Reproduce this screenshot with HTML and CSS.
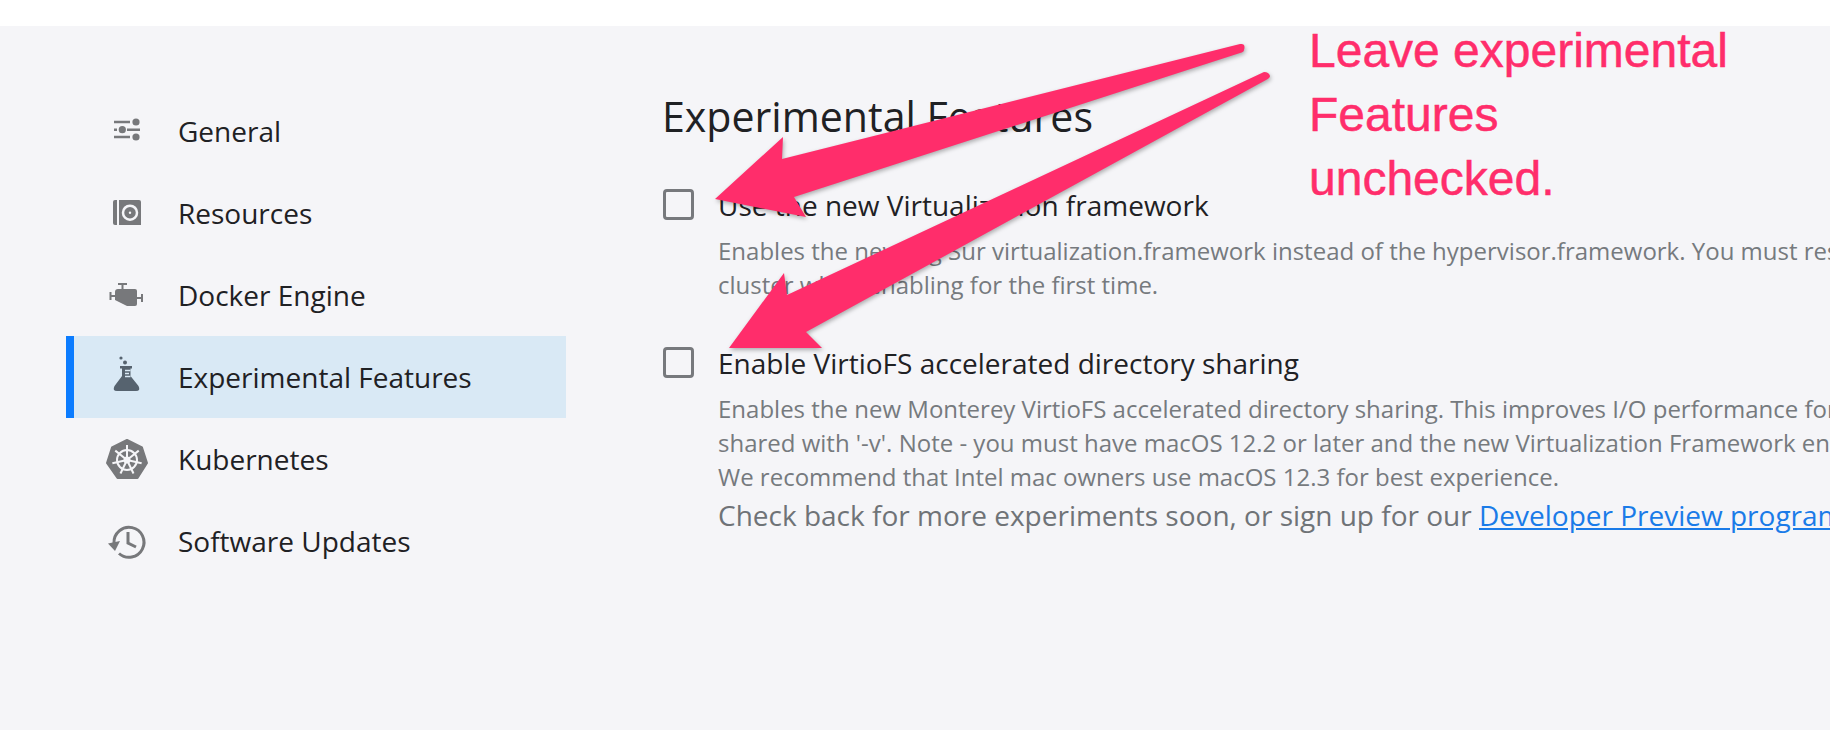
FILE: index.html
```html
<!DOCTYPE html>
<html lang="en">
<head>
    <meta charset="UTF-8">
    <meta name="viewport" content="width=device-width, initial-scale=1.0">
    <title>Experimental Features</title>
    <link rel="stylesheet" href="styles.css">
</head>
<body>
    <div class="topbar"></div>
    <div class="settings">
        <nav class="sidebar">
            <a class="nav-item">
                <svg class="nav-icon" viewBox="0 0 44 44">
                    <path class="line" d="M9 13H25M9 20.7H12M22 20.7H35M9 28H25"/>
                    <circle cx="31" cy="13" r="3.6"/>
                    <circle cx="17.3" cy="20.7" r="3.6"/>
                    <circle cx="31" cy="28" r="3.6"/>
                </svg>
                General
            </a>
            <a class="nav-item">
                <svg class="nav-icon" viewBox="0 0 44 44">
                    <path d="M12 9V34H10Q8 34 8 32V11Q8 9 10 9Z"/>
                    <path d="M14 9H34Q36 9 36 11V34H14Z"/>
                    <circle class="ring" cx="25" cy="21.7" r="7"/>
                    <circle class="hole" cx="25" cy="21.7" r="1.2"/>
                </svg>
                Resources
            </a>
            <a class="nav-item">
                <svg class="nav-icon" viewBox="0 0 44 44">
                    <path d="M13 16H30Q32 16 32 18V31Q32 33 30 33H22L10 27V19Q10 16 13 16Z"/>
                    <path class="line thin" d="M13 11H22M17.5 11V16M5.500 19V27M6 23H10M37 21V29M32 25H37"/>
                </svg>
                Docker Engine
            </a>
            <a class="nav-item active">
                <svg class="nav-icon" viewBox="0 0 44 44">
                    <circle cx="16" cy="3" r="1.600"/>
                    <circle cx="20" cy="7.500" r="2"/>
                    <path d="M15 11H27V13.500H25.500V21L33.500 31Q36 36 31 36H12Q7 36 9.500 31L17 21V13.500H15Z"/>
                    <path class="flask-marks" d="M20 15.500H25.500M20 18.500H24M20 21.500H25.500"/>
                </svg>
                Experimental Features
            </a>
            <a class="nav-item">
                <svg class="nav-icon" viewBox="0 0 44 44">
                    <path class="hept" d="M22 3L37 10.500L42 26L32.500 41H12.500L2 26L7 10.500Z"/>
                    <g class="wheel">
                        <circle cx="22" cy="23" r="10"/>
                        <circle class="hub" cx="22" cy="23" r="2.500"/>
                        <path d="M22 23V8"/>
                        <path d="M22 23V8" transform="rotate(51.430 22 23)"/>
                        <path d="M22 23V8" transform="rotate(102.860 22 23)"/>
                        <path d="M22 23V8" transform="rotate(154.290 22 23)"/>
                        <path d="M22 23V8" transform="rotate(205.710 22 23)"/>
                        <path d="M22 23V8" transform="rotate(257.140 22 23)"/>
                        <path d="M22 23V8" transform="rotate(308.570 22 23)"/>
                    </g>
                </svg>
                Kubernetes
            </a>
            <a class="nav-item">
                <svg class="nav-icon" viewBox="0 0 44 44">
                    <path class="line arc" d="M9 24A15 15 0 1 1 14 34.500"/>
                    <path d="M3 24.500L15 22L10 32Z"/>
                    <path class="line arc" d="M23 13V24L31 28"/>
                </svg>
                Software Updates
            </a>
        </nav>

        <main class="content">
            <h1>Experimental Features</h1>

            <div class="option">
                <span class="checkbox"></span>
                <div class="option-text">
                    <div class="option-label">Use the new Virtualization framework</div>
                    <p class="option-desc">Enables the new Big Sur virtualization.framework instead of the hypervisor.framework. You must reset the Kubernetes<br>cluster when enabling for the first time.</p>
                </div>
            </div>

            <div class="option">
                <span class="checkbox"></span>
                <div class="option-text">
                    <div class="option-label">Enable VirtioFS accelerated directory sharing</div>
                    <p class="option-desc">Enables the new Monterey VirtioFS accelerated directory sharing. This improves I/O performance for bind mounts<br>shared with '-v'. Note - you must have macOS 12.2 or later and the new Virtualization Framework enabled.<br>We recommend that Intel mac owners use macOS 12.3 for best experience.</p>
                    <p class="more">Check back for more experiments soon, or sign up for our <a href="#">Developer Preview program.</a></p>
                </div>
            </div>
        </main>
    </div>

    <!-- annotation drawn over the screenshot -->
    <svg class="arrows" viewBox="0 0 1830 730">
        <path d="M1240 44Q1246 43 1244 50Q1244 52 1240 53L794 197L806 217L715 199L783 137L782 159Z"/>
        <path d="M1264 72Q1269 72 1270 76Q1270 78 1266 80L806 332L822 348H729L784 273L787 295Z"/>
    </svg>
    <div class="note">Leave experimental<br>Features<br>unchecked.</div>
</body>
</html>
```

FILE: styles.css
```css
html, body {
    height: 100%;
}
body {
    margin: 0;
    background-color: #f5f5f8;
    color: #1f2124;
    font-family: "Open Sans", sans-serif;
    overflow: hidden;
}
.topbar {
    height: 26px;
    background-color: #fff;
}
.settings {
    display: flex;
    width: 1830px;
}

/* Sidebar */
.sidebar {
    flex: none;
    width: 500px;
    margin: 64px 0 0 66px;
}
.nav-item {
    display: flex;
    align-items: center;
    gap: 29px;
    height: 82px;
    padding-left: 39px;
    font-size: 28px;
}
.nav-item.active {
    background-color: #d9e9f5;
    box-shadow: inset 8px 0 0 #0b7cff;
}
.nav-icon {
    flex: none;
    width: 44px;
    height: 44px;
    fill: #77787b;
    overflow: visible;
}
.active .nav-icon {
    fill: #56636f;
}
.line {
    fill: none;
    stroke: #77787b;
    stroke-width: 2.500;
}
.thin {
    stroke-width: 2;
}
.arc {
    stroke-width: 3;
}
.ring {
    fill: none;
    stroke: #f5f5f8;
    stroke-width: 2.500;
}
.hole {
    fill: #f5f5f8;
}
.flask-marks {
    fill: none;
    stroke: #d9e9f5;
    stroke-width: 1.500;
}
.hept {
    stroke: #77787b;
    stroke-width: 2;
    stroke-linejoin: round;
}
.wheel {
    fill: none;
    stroke: #f5f5f8;
    stroke-width: 2;
}
.wheel .hub {
    fill: #f5f5f8;
}

/* Main panel */
.content {
    flex: none;
    margin-left: 97px;
    white-space: nowrap;
}
h1 {
    margin: 64px 0 47px -1px;
    font-size: 41.100px;
    font-weight: 400;
    line-height: 52px;
}
.option {
    display: flex;
    gap: 24px;
    margin-bottom: 45px;
}
.checkbox {
    flex: none;
    box-sizing: border-box;
    width: 31px;
    height: 31px;
    border: 3.500px solid #77797d;
    border-radius: 4px;
}
.option-label {
    font-size: 28px;
    line-height: 33px;
}
.option-desc {
    margin: 12px 0 0;
    color: #767a7e;
    font-size: 24px;
    line-height: 34px;
}
.more {
    margin: 3px 0 0;
    color: #6f7377;
    font-size: 28px;
    line-height: 36px;
}
.more a {
    color: #1a7be8;
}

/* Annotation */
.arrows {
    position: absolute;
    top: 0;
    left: 0;
    width: 1830px;
    height: 730px;
    fill: #ff2d6b;
    filter: drop-shadow(1px 2px 2px rgba(0, 0, 0, 0.3));
}
.note {
    position: absolute;
    top: 19px;
    left: 1309px;
    color: #ff2d6b;
    font-family: "Liberation Sans", Arial, sans-serif;
    font-size: 48px;
    line-height: 64px;
    white-space: nowrap;
    -webkit-text-stroke: 0.500px #ff2d6b;
}
```
